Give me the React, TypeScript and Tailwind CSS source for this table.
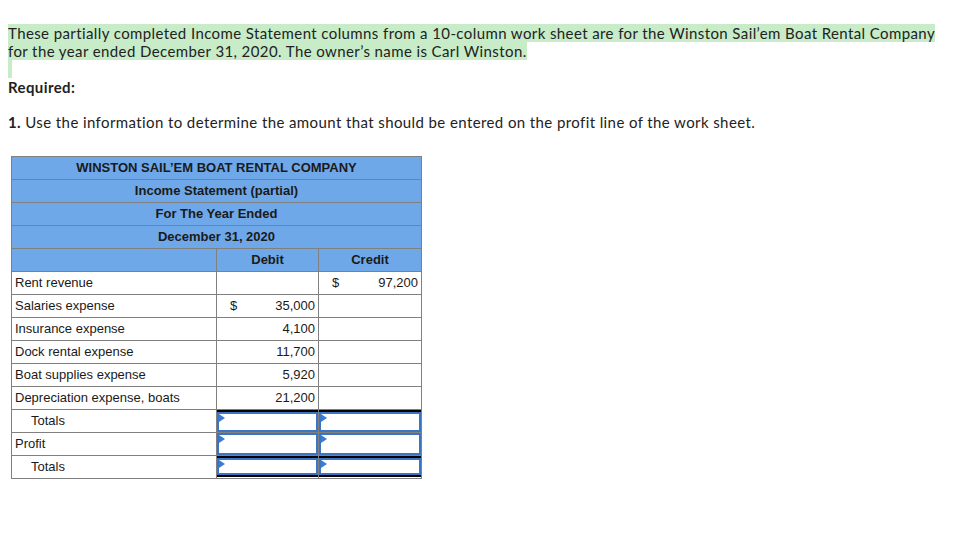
import React from "react";

type Row = {
    label: string;
    indent?: boolean;
    debit?: string;
    credit?: string;
    dollarDebit?: boolean;
    dollarCredit?: boolean;
    input?: "totals" | "profit" | "final";
};

const rows: Row[] = [
    { label: "Rent revenue", credit: "97,200", dollarCredit: true },
    { label: "Salaries expense", debit: "35,000", dollarDebit: true },
    { label: "Insurance expense", debit: "4,100" },
    { label: "Dock rental expense", debit: "11,700" },
    { label: "Boat supplies expense", debit: "5,920" },
    { label: "Depreciation expense, boats", debit: "21,200" },
    { label: "Totals", indent: true, input: "totals" },
    { label: "Profit", input: "profit" },
    { label: "Totals", indent: true, input: "final" },
];

// 입력칸 (파란 테두리 + 작은 삼각형)
function InputCell({ kind }: { kind: "totals" | "profit" | "final" }) {
    return (
        <td className="border border-[#808080] p-0 h-[23px] align-top">
            <div className="flex flex-col h-[22px]">
                {kind !== "profit" && <div className="h-[2px] bg-black" />}
                <div className="relative flex-1 border-2 border-[#3a74c4]">
                    <div className="absolute left-0 top-0 w-0 h-0 border-y-[4px] border-y-transparent border-l-[6px] border-l-[#3a7bd5]" />
                </div>
                {kind === "final" && (
                    <>
                        <div className="h-[2px] bg-black" />
                        <div className="h-[1px] bg-white" />
                    </>
                )}
            </div>
        </td>
    );
}

export default function App() {
    return (
        <div className="min-h-screen bg-white pl-2 pt-[25px] font-['Lato','Open_Sans',sans-serif] text-[15px] tracking-[0.4px] text-[#222]">
            {/* 문제 설명 */}
            <p className="leading-[17.5px]">
                <span className="bg-[#c8ecc8] whitespace-nowrap">
                    These partially completed Income Statement columns from a 10-column work sheet are for the Winston Sail’em Boat Rental Company
                </span>
                <br />
                <span className="bg-[#c8ecc8]">for the year ended December 31, 2020. The owner’s name is Carl Winston.</span>
            </p>
            <div className="w-[4px] h-[18px] bg-[#c8ecc8]" />
            <p className="font-bold leading-[18px]">Required:</p>
            <p className="mt-[17px] leading-[18px]">
                <span className="font-bold">1.</span> Use the information to determine the amount that should be entered on the profit line of the work sheet.
            </p>

            {/* 손익계산서 표 */}
            <table className="mt-[25px] ml-[3px] border-collapse w-[411px] font-['Liberation_Sans',Arial,sans-serif] text-[13px] tracking-normal text-[#1a1a1a]">
                <tbody>
                    {[
                        "WINSTON SAIL’EM BOAT RENTAL COMPANY",
                        "Income Statement (partial)",
                        "For The Year Ended",
                        "December 31, 2020",
                    ].map((t) => (
                        <tr key={t}>
                            <td colSpan={3} className="border border-[#808080] bg-[#6fa8e8] h-[23px] p-0 text-center font-bold">
                                {t}
                            </td>
                        </tr>
                    ))}
                    <tr>
                        <td className="border border-[#808080] bg-[#6fa8e8] h-[23px] w-[205px] p-0" />
                        <td className="border border-[#808080] bg-[#6fa8e8] h-[23px] w-[102px] p-0 text-center font-bold">Debit</td>
                        <td className="border border-[#808080] bg-[#6fa8e8] h-[23px] p-0 text-center font-bold">Credit</td>
                    </tr>
                    {rows.map((r, i) => (
                        <tr key={i}>
                            <td className={"border border-[#808080] h-[23px] p-0 " + (r.indent ? "pl-[19px]" : "pl-[3px]")}>
                                {r.label}
                            </td>
                            {r.input ? (
                                <>
                                    <InputCell kind={r.input} />
                                    <InputCell kind={r.input} />
                                </>
                            ) : (
                                <>
                                    <td className="border border-[#808080] h-[23px] p-0">
                                        <div className="flex justify-between pl-[13px] pr-[3px]">
                                            <span>{r.dollarDebit ? "$" : ""}</span>
                                            <span>{r.debit}</span>
                                        </div>
                                    </td>
                                    <td className="border border-[#808080] h-[23px] p-0">
                                        <div className="flex justify-between pl-[13px] pr-[3px]">
                                            <span>{r.dollarCredit ? "$" : ""}</span>
                                            <span>{r.credit}</span>
                                        </div>
                                    </td>
                                </>
                            )}
                        </tr>
                    ))}
                </tbody>
            </table>
        </div>
    );
}
